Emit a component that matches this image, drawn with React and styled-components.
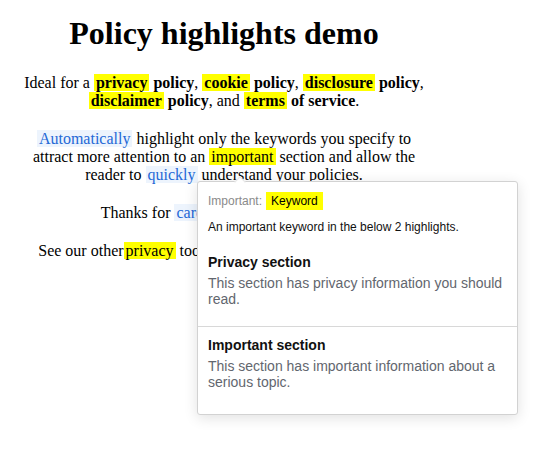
import React from "react";
import styled, { createGlobalStyle, css } from "styled-components";

const GlobalStyle = createGlobalStyle`
  html, body { margin: 0; padding: 0; background: #ffffff; }
  body { font-family: "Liberation Serif", "Times New Roman", serif; color: #000; }
`;

const Page = styled.div`
  position: relative;
  width: 550px;
  height: 450px;
  overflow: hidden;
`;

const Content = styled.main`
  width: 400px;
  margin-left: 24px;
  padding-top: 15px;
  text-align: center;
`;

const Title = styled.h1`
  margin: 0 0 23px;
  font-size: 32px;
  line-height: 36px;
  font-weight: bold;
`;

const Para = styled.p`
  margin: 0 0 20px;
  font-size: 16px;
  line-height: 18px;
`;

const Strong = styled.strong`
  font-weight: bold;
`;

const variants = {
  policy: css`
    background: #ffff00;
    color: #000;
  `,
  important: css`
    background: #ffff00;
    color: #000;
  `,
  info: css`
    background: #edf4fd;
    color: #2468d6;
  `,
};

const Mark = styled.span`
  padding: 0 2px;
  ${(p) => variants[p.$kind]}
`;

const Popover = styled.div`
  position: absolute;
  left: 197px;
  top: 181px;
  width: 319px;
  padding-bottom: 5px;
  background: #fff;
  border: 1px solid #d2d2d2;
  border-radius: 3px;
  box-shadow: 0 3px 14px rgba(0, 0, 0, 0.12);
  font-family: "Liberation Sans", Arial, Helvetica, sans-serif;

  &::before {
    content: "";
    position: absolute;
    top: -4px;
    left: 38px;
    width: 7px;
    height: 7px;
    background: #fff;
    border-top: 1px solid #e6e6e6;
    border-left: 1px solid #e6e6e6;
    transform: rotate(45deg);
  }
`;

const Header = styled.div`
  padding: 10px;
`;

const TagRow = styled.div`
  display: flex;
  align-items: center;
  gap: 4px;
  font-size: 12px;
  line-height: 14px;
`;

const TagLabel = styled.span`
  color: #8a8a8a;
`;

const Keyword = styled.span`
  background: #ffff00;
  color: #000;
  padding: 2px 5px;
`;

const Desc = styled.div`
  margin-top: 10px;
  font-size: 12px;
  line-height: 14px;
  color: #111;
`;

const Section = styled.section`
  padding: 10px 10px 19px;
  border-top: ${(p) => (p.$divided ? "1px solid #d8d8d8" : "none")};
`;

const SectionTitle = styled.div`
  font-size: 14px;
  line-height: 16px;
  font-weight: bold;
  color: #111;
`;

const SectionBody = styled.div`
  margin-top: 5px;
  font-size: 14px;
  line-height: 16px;
  color: #62666e;
`;

export default function App() {
  return (
    <Page>
      <GlobalStyle />
      <Content>
        <Title>Policy highlights demo</Title>
        <Para>
          Ideal for a{" "}
          <Strong>
            <Mark $kind="policy">privacy</Mark> policy
          </Strong>
          ,{" "}
          <Strong>
            <Mark $kind="policy">cookie</Mark> policy
          </Strong>
          ,{" "}
          <Strong>
            <Mark $kind="policy">disclosure</Mark> policy
          </Strong>
          ,{" "}
          <Strong>
            <Mark $kind="policy">disclaimer</Mark> policy
          </Strong>
          , and{" "}
          <Strong>
            <Mark $kind="policy">terms</Mark> of service
          </Strong>
          .
        </Para>
        <Para>
          <Mark $kind="info">Automatically</Mark> highlight only the keywords you
          specify to attract more attention to an{" "}
          <Mark $kind="important">important</Mark> section and allow the reader
          to <Mark $kind="info">quickly</Mark> understand your policies.
        </Para>
        <Para>
          Thanks for <Mark $kind="info">carefully</Mark> reading them all.
        </Para>
        <Para>
          See our other<Mark $kind="important">privacy</Mark> tools and terms for
          full information.
        </Para>
      </Content>
      <Popover>
        <Header>
          <TagRow>
            <TagLabel>Important:</TagLabel>
            <Keyword>Keyword</Keyword>
          </TagRow>
          <Desc>An important keyword in the below 2 highlights.</Desc>
        </Header>
        <Section>
          <SectionTitle>Privacy section</SectionTitle>
          <SectionBody>
            This section has privacy information you should read.
          </SectionBody>
        </Section>
        <Section $divided>
          <SectionTitle>Important section</SectionTitle>
          <SectionBody>
            This section has important information about a serious topic.
          </SectionBody>
        </Section>
      </Popover>
    </Page>
  );
}
